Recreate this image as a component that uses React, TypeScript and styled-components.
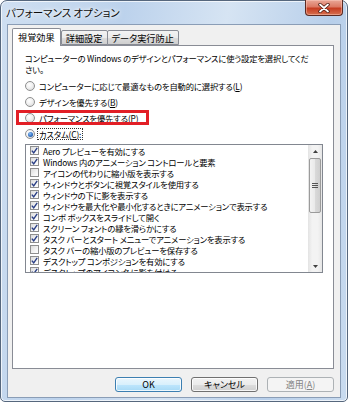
import { FC } from "react";
import styled, { createGlobalStyle } from "styled-components";

const GlobalStyle = createGlobalStyle`
  html, body {
    margin: 0;
    padding: 0;
    background: #ffffff;
  }
  body {
    font-family: "Noto Sans CJK JP", "Noto Sans", sans-serif;
    font-feature-settings: "palt";
    color: #000;
  }
  * {
    box-sizing: border-box;
  }
`;

interface EffectItem {
  label: string;
  checked: boolean;
}

const effects: EffectItem[] = [
  { label: "Aero プレビューを有効にする", checked: true },
  { label: "Windows 内のアニメーション コントロールと要素", checked: true },
  { label: "アイコンの代わりに縮小版を表示する", checked: false },
  { label: "ウィンドウとボタンに視覚スタイルを使用する", checked: true },
  { label: "ウィンドウの下に影を表示する", checked: true },
  { label: "ウィンドウを最大化や最小化するときにアニメーションで表示する", checked: true },
  { label: "コンボ ボックスをスライドして開く", checked: true },
  { label: "スクリーン フォントの縁を滑らかにする", checked: true },
  { label: "タスク バーとスタート メニューでアニメーションを表示する", checked: true },
  { label: "タスク バーの縮小版のプレビューを保存する", checked: false },
  { label: "デスクトップ コンポジションを有効にする", checked: true },
  { label: "デスクトップのアイコン名に影を付ける", checked: true },
];

interface RadioItem {
  text: string;
  key: string;
  tail?: string;
  selected?: boolean;
  highlight?: boolean;
}

const radios: RadioItem[] = [
  { text: "コンピューターに応じて最適なものを自動的に選択する", key: "L" },
  { text: "デザインを優先する", key: "B" },
  { text: "パフォーマンスを優先する", key: "P", highlight: true },
  { text: "カスタム", key: "C", tail: ":", selected: true },
];

const CloseGlyph: FC = () => (
  <svg width="12" height="10" viewBox="0 0 12 10">
    <path d="M2 1.5 L10 8.5 M10 1.5 L2 8.5" stroke="#4a1a12" strokeWidth="3.4" strokeLinecap="round" />
    <path d="M2 1.5 L10 8.5 M10 1.5 L2 8.5" stroke="#ffffff" strokeWidth="1.8" strokeLinecap="round" />
  </svg>
);

const CheckGlyph: FC = () => (
  <svg width="7" height="7" viewBox="0 0 7 7">
    <path d="M0.8 3.6 L2.7 5.8 L6.2 0.8" stroke="#2a3f86" strokeWidth="1.4" fill="none" />
  </svg>
);

const Arrow: FC<{ down?: boolean }> = ({ down }) => (
  <svg width="5" height="3" viewBox="0 0 5 3">
    <path d={down ? "M0 0 L5 0 L2.5 3 Z" : "M0 3 L5 3 L2.5 0 Z"} fill="#404040" />
  </svg>
);

const App: FC = () => {
  return (
    <>
      <GlobalStyle />
      <Window>
        <TitleBar>
          <Title>パフォーマンス オプション</Title>
          <CloseButton>
            <CloseGlyph />
          </CloseButton>
        </TitleBar>
        <Client>
          <TabStrip>
            <Tab $active>視覚効果</Tab>
            <Tab>詳細設定</Tab>
            <Tab>データ実行防止</Tab>
          </TabStrip>
          <Panel>
            <Description>
              コンピューターの Windows のデザインとパフォーマンスに使う設定を選択してくだ
              <br />
              さい。
            </Description>
            <RadioGroup>
              {radios.map((r) => (
                <RadioRow key={r.key}>
                  <RadioDot $selected={r.selected} />
                  <RadioLabel $focused={r.selected}>
                    {r.text}(<u>{r.key}</u>){r.tail}
                  </RadioLabel>
                  {r.highlight && <Highlight />}
                </RadioRow>
              ))}
            </RadioGroup>
            <ListBox>
              <ListItems>
                {effects.map((e, i) => (
                  <ListRow key={i}>
                    <CheckBox>{e.checked && <CheckGlyph />}</CheckBox>
                    <ItemText>{e.label}</ItemText>
                  </ListRow>
                ))}
              </ListItems>
              <ScrollBar>
                <ScrollButton>
                  <Arrow />
                </ScrollButton>
                <Thumb>
                  <Grip />
                </Thumb>
                <Track />
                <ScrollButton>
                  <Arrow down />
                </ScrollButton>
              </ScrollBar>
            </ListBox>
          </Panel>
          <ButtonRow>
            <Button $default>OK</Button>
            <Button>キャンセル</Button>
            <Button $disabled>
              適用(<u>A</u>)
            </Button>
          </ButtonRow>
        </Client>
      </Window>
    </>
  );
};

export default App;

const Window = styled.div`
  width: 348px;
  height: 402px;
  display: flex;
  flex-direction: column;
  padding: 0 6px 3px 6px;
  border: 1px solid #56677d;
  border-radius: 7px 7px 5px 5px;
  background: linear-gradient(
    100deg,
    #cfdff1 0%,
    #bcd2ec 30%,
    #d6e4f3 55%,
    #b8cfea 80%,
    #c9dbef 100%
  );
  box-shadow: inset 0 0 0 1px rgba(255, 255, 255, 0.7);
`;

const TitleBar = styled.div`
  height: 23px;
  margin: 0 -6px;
  padding: 0 4px 0 5px;
  display: flex;
  justify-content: space-between;
  align-items: flex-start;
`;

const Title = styled.div`
  font-size: 10.5px;
  line-height: 23px;
  color: #0c0c0c;
  text-shadow: 0 0 6px #ffffff, 0 0 3px #ffffff;
`;

const CloseButton = styled.div`
  width: 38px;
  height: 16px;
  margin-top: -1px;
  display: flex;
  align-items: center;
  justify-content: center;
  border: 1px solid #5b2a22;
  border-top: none;
  border-radius: 0 0 4px 4px;
  background: linear-gradient(
    to bottom,
    #e9a797 0%,
    #dc7a65 45%,
    #c63d22 55%,
    #d6704f 100%
  );
  box-shadow: inset 0 0 0 1px rgba(255, 210, 200, 0.45);
`;

const Client = styled.div`
  flex: 1;
  display: flex;
  flex-direction: column;
  padding: 3px 6px 0 4px;
  background: #f0f0f0;
  border: 1px solid #8a9db6;
`;

const TabStrip = styled.div`
  display: flex;
  align-items: flex-end;
  height: 17px;
  position: relative;
  z-index: 1;
`;

const Tab = styled.div<{ $active?: boolean }>`
  height: ${(p) => (p.$active ? "18px" : "15px")};
  margin-bottom: ${(p) => (p.$active ? "-1px" : "0")};
  margin-right: ${(p) => (p.$active ? "0" : "-1px")};
  padding: 0 ${(p) => (p.$active ? "5px" : "4px")};
  font-size: 9.2px;
  line-height: ${(p) => (p.$active ? "17px" : "14px")};
  color: #000;
  border: 1px solid #898c95;
  border-bottom: ${(p) => (p.$active ? "none" : "1px solid #898c95")};
  border-radius: 2px 2px 0 0;
  background: ${(p) =>
    p.$active ? "#ffffff" : "linear-gradient(to bottom, #f3f3f3 0%, #ebebeb 50%, #dddddd 51%, #cfcfcf 100%)"};
`;

const Panel = styled.div`
  height: 324px;
  background: #ffffff;
  border: 1px solid #898c95;
  padding: 7px 0 0 12px;
`;

const Description = styled.div`
  font-size: 8.3px;
  letter-spacing: -0.15px;
  line-height: 11px;
  white-space: nowrap;
`;

const RadioGroup = styled.div`
  margin-top: 3px;
  display: flex;
  flex-direction: column;
  align-items: flex-start;
`;

const RadioRow = styled.div`
  position: relative;
  height: 16px;
  display: flex;
  align-items: center;
  gap: 3px;
  font-size: 8.3px;
  letter-spacing: -0.15px;
`;

const RadioDot = styled.div<{ $selected?: boolean }>`
  width: 10px;
  height: 10px;
  border-radius: 50%;
  border: 1px solid #8e8f8f;
  background: radial-gradient(circle at 40% 35%, #ffffff 0%, #f0f0f0 45%, #d4d4d4 100%);
  display: flex;
  align-items: center;
  justify-content: center;
  &::after {
    content: "";
    display: ${(p) => (p.$selected ? "block" : "none")};
    width: 5px;
    height: 5px;
    border-radius: 50%;
    background: radial-gradient(circle at 40% 35%, #8ec1f5 0%, #3a78c8 50%, #163f80 100%);
  }
`;

const RadioLabel = styled.span<{ $focused?: boolean }>`
  line-height: 10px;
  padding: 0 1px;
  outline: ${(p) => (p.$focused ? "1px dotted #333" : "none")};
  outline-offset: 0;
`;

const Highlight = styled.div`
  position: absolute;
  left: -9px;
  right: -10px;
  top: 0;
  bottom: 1px;
  border: 3px solid #e21f26;
  pointer-events: none;
`;

const ListBox = styled.div`
  margin-top: 2px;
  width: 298px;
  height: 129px;
  border: 1px solid #828790;
  display: flex;
  overflow: hidden;
`;

const ListItems = styled.div`
  flex: 1;
  padding: 0 0 0 4px;
  overflow: hidden;
`;

const ListRow = styled.div`
  height: 11px;
  display: flex;
  align-items: center;
  gap: 4px;
  white-space: nowrap;
`;

const ItemText = styled.span`
  font-size: 8.3px;
  letter-spacing: -0.15px;
  line-height: 10px;
`;

const CheckBox = styled.div`
  width: 9px;
  height: 9px;
  flex-shrink: 0;
  border: 1px solid #8f8f8f;
  background: linear-gradient(135deg, #dcdcdc 0%, #f4f4f4 60%, #ffffff 100%);
  display: flex;
  align-items: center;
  justify-content: center;
`;

const ScrollBar = styled.div`
  width: 14px;
  display: flex;
  flex-direction: column;
  background: linear-gradient(to right, #e3e3e3 0%, #f3f3f3 30%, #f3f3f3 70%, #e6e6e6 100%);
`;

const ScrollButton = styled.div`
  height: 12px;
  display: flex;
  align-items: center;
  justify-content: center;
`;

const Thumb = styled.div`
  height: 55px;
  margin: 1px 1px 0 1px;
  border: 1px solid #9b9b9b;
  border-radius: 2px;
  background: linear-gradient(to right, #f3f3f3 0%, #eaeaea 45%, #d9d9d9 55%, #cfcfcf 100%);
  display: flex;
  align-items: center;
  justify-content: center;
`;

const Grip = styled.div`
  width: 6px;
  height: 5px;
  background: repeating-linear-gradient(
    to bottom,
    #555555 0px,
    #555555 1px,
    transparent 1px,
    transparent 2px
  );
`;

const Track = styled.div`
  flex: 1;
`;

const ButtonRow = styled.div`
  margin-top: 8px;
  display: flex;
  justify-content: flex-end;
  gap: 9px;
`;

const Button = styled.div<{ $default?: boolean; $disabled?: boolean }>`
  width: 67px;
  height: 15px;
  font-size: 9px;
  line-height: 13px;
  text-align: center;
  border-radius: 3px;
  border: 1px solid
    ${(p) => (p.$default ? "#3c7fb1" : p.$disabled ? "#adb2b5" : "#707070")};
  color: ${(p) => (p.$disabled ? "#838383" : "#000")};
  background: ${(p) =>
    p.$disabled
      ? "#f4f4f4"
      : p.$default
      ? "linear-gradient(to bottom, #eaf6fd 0%, #d9f0fc 50%, #bee6fd 51%, #a7d9f5 100%)"
      : "linear-gradient(to bottom, #f2f2f2 0%, #ebebeb 50%, #dddddd 51%, #cfcfcf 100%)"};
  box-shadow: ${(p) => (p.$disabled ? "none" : "inset 0 0 0 1px rgba(255, 255, 255, 0.8)")};
`;
